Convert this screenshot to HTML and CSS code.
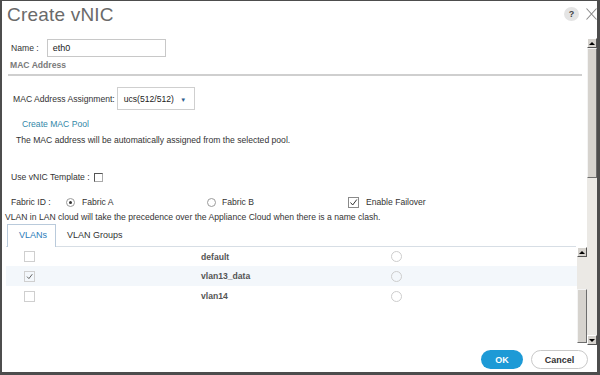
FILE: index.html
```html
<!DOCTYPE html>
<html lang="en">
<head>
    <meta charset="UTF-8">
    <title>Create vNIC</title>
    <link rel="stylesheet" href="styles.css">
</head>
<body>
    <div class="dialog">
        <div class="header">
            <h1 class="title">Create vNIC</h1>
            <span class="help">?</span>
            <svg class="close" width="11" height="12" viewBox="0 0 11 12">
                <path d="M0.5 0.5 L10.5 11.5 M10.5 0.5 L0.5 11.5" stroke="#8a8a8a" stroke-width="1.1" fill="none"/>
            </svg>
        </div>

        <div class="main">
            <div class="content">
                <div class="name-row">
                    <span class="label">Name :</span>
                    <div class="text-input">eth0</div>
                </div>
                <div class="section-title">MAC Address</div>
                <div class="rule"></div>

                <div class="assign-row">
                    <span class="label">MAC Address Assignment:</span>
                    <div class="select">ucs(512/512) <span class="caret">&#9660;</span></div>
                </div>
                <div class="link">Create MAC Pool</div>
                <div class="desc">The MAC address will be automatically assigned from the selected pool.</div>

                <div class="template-row">
                    <span class="label">Use vNIC Template :</span>
                    <span class="box-small"></span>
                </div>

                <div class="fabric-row">
                    <span class="label fabric-label">Fabric ID :</span>
                    <span class="radio checked"></span>
                    <span class="opt-a">Fabric A</span>
                    <span class="radio"></span>
                    <span class="opt-b">Fabric B</span>
                    <span class="checkbox dark">
                        <svg width="9" height="9" viewBox="0 0 9 9"><path d="M1.5 4.5 L3.7 7 L7.8 1.5" stroke="#333" stroke-width="1" fill="none"/></svg>
                    </span>
                    <span class="failover">Enable Failover</span>
                </div>

                <div class="note">VLAN in LAN cloud will take the precedence over the Appliance Cloud when there is a name clash.</div>

                <div class="vlan-panel">
                    <div class="tabs">
                        <div class="tab active">VLANs</div>
                        <div class="tab">VLAN Groups</div>
                    </div>
                    <div class="table-area">
                        <div class="rows">
                            <div class="row">
                                <span class="checkbox"></span>
                                <span class="vlan-name">default</span>
                                <span class="radio light"></span>
                            </div>
                            <div class="row selected">
                                <span class="checkbox">
                                    <svg width="9" height="9" viewBox="0 0 9 9"><path d="M2 4.6 L3.9 6.6 L7.3 2.2" stroke="#555" stroke-width="0.9" fill="none"/></svg>
                                </span>
                                <span class="vlan-name">vlan13_data</span>
                                <span class="radio light"></span>
                            </div>
                            <div class="row">
                                <span class="checkbox"></span>
                                <span class="vlan-name">vlan14</span>
                                <span class="radio light"></span>
                            </div>
                        </div>
                        <div class="scrollbar inner">
                            <div class="arrow up"></div>
                            <div class="track short"></div>
                            <div class="thumb grow"></div>
                        </div>
                    </div>
                </div>
            </div>

            <div class="scrollbar outer">
                <div class="arrow up"></div>
                <div class="thumb tall"></div>
                <div class="track grow"></div>
                <div class="arrow down"></div>
            </div>
        </div>

        <div class="footer">
            <button class="btn btn-ok">OK</button>
            <button class="btn btn-cancel">Cancel</button>
        </div>
    </div>
</body>
</html>
```

FILE: styles.css
```css
body {
    margin: 0;
    font-family: "Liberation Sans", Arial, sans-serif;
    font-size: 8.6px;
    color: #333;
}

.dialog {
    width: 600px;
    height: 375px;
    box-sizing: border-box;
    border: 2px solid #4d4d4d;
    border-top-width: 1px;
    border-right-width: 3px;
    border-bottom-width: 3px;
    background-color: #fff;
    display: flex;
    flex-direction: column;
}

/* header */
.header {
    height: 36px;
    flex-shrink: 0;
    display: flex;
    align-items: flex-start;
    padding-left: 5px;
}

.title {
    flex: 1;
    margin: 3px 0 0 0;
    font-size: 19px;
    font-weight: normal;
    color: #6a6a6a;
    letter-spacing: 0.2px;
}

.help {
    width: 15px;
    height: 14px;
    margin-top: 6px;
    border-radius: 50%;
    background-color: #e4e4e4;
    color: #444;
    font-size: 9px;
    font-weight: bold;
    text-align: center;
    line-height: 14px;
}

.close {
    margin: 7px 0 0 7px;
}

/* main area */
.main {
    height: 308px;
    flex-shrink: 0;
    display: flex;
}

.content {
    flex: 1;
    overflow: hidden;
}

.label {
    white-space: nowrap;
}

.name-row {
    margin-top: 2px;
    height: 18px;
    display: flex;
    align-items: center;
    padding-left: 9px;
}

.text-input {
    margin-left: 8px;
    width: 112px;
    height: 16px;
    border: 1px solid #c8c8c8;
    padding-left: 5px;
    line-height: 16px;
    font-size: 9px;
    color: #222;
}

.section-title {
    margin: 2px 0 0 8px;
    height: 12px;
    line-height: 12px;
    color: #7a7a7a;
    font-weight: bold;
}

.rule {
    margin: 3px 5px 0 6px;
    height: 2px;
    background-color: #cfcfcf;
}

.assign-row {
    margin-top: 11px;
    height: 23px;
    display: flex;
    align-items: center;
    padding-left: 11px;
}

.select {
    margin-left: 2px;
    width: 70px;
    height: 21px;
    border: 1px solid #cfcfcf;
    padding-left: 6px;
    line-height: 22px;
    color: #222;
    white-space: nowrap;
}

.caret {
    margin-left: 4px;
    font-size: 6px;
    color: #2d5d8c;
}

.link {
    margin: 8px 0 0 20px;
    height: 12px;
    line-height: 12px;
    color: #3287a8;
}

.desc {
    margin: 4px 0 0 14px;
    height: 12px;
    line-height: 12px;
}

.template-row {
    margin-top: 25px;
    height: 12px;
    display: flex;
    align-items: center;
    padding-left: 9px;
}

.box-small {
    margin-left: 4px;
    width: 7px;
    height: 7px;
    border: 1px solid #555;
    border-right-color: #aaa;
    border-bottom-color: #aaa;
}

.fabric-row {
    margin-top: 12px;
    height: 14px;
    display: flex;
    align-items: center;
    padding-left: 9px;
}

.fabric-label {
    width: 55px;
}

.radio {
    width: 9px;
    height: 9px;
    border: 1px solid #9a9a9a;
    border-radius: 50%;
    box-sizing: border-box;
    display: flex;
    align-items: center;
    justify-content: center;
}

.radio.checked::after {
    content: "";
    width: 3px;
    height: 3px;
    border-radius: 50%;
    background-color: #333;
}

.radio.light {
    width: 11px;
    height: 11px;
    border-color: #cdcdcd;
}

.opt-a {
    margin-left: 7px;
    width: 125px;
}

.opt-b {
    margin-left: 6px;
    width: 126px;
}

.checkbox {
    width: 11px;
    height: 11px;
    box-sizing: border-box;
    border: 1px solid #cfcfcf;
    display: flex;
    align-items: center;
    justify-content: center;
}

.checkbox.dark {
    border-color: #8a8a8a;
}

.failover {
    margin-left: 7px;
}

.note {
    margin: 3px 0 0 3px;
    height: 10px;
    line-height: 10px;
    white-space: nowrap;
}

/* vlan tabs + table */
.vlan-panel {
    margin: 2px 0 0 4px;
}

.tabs {
    height: 22px;
    display: flex;
    border-bottom: 1px solid #d7dee5;
    margin-right: 11px;
}

.tab {
    padding: 0 11px;
    line-height: 22px;
    font-size: 9px;
    color: #333;
}

.tab.active {
    margin-left: 1px;
    width: 25px;
    border: 1px solid #b9cadb;
    border-bottom: none;
    line-height: 21px;
    color: #2b7bb9;
    margin-bottom: -1px;
    background-color: #fff;
    position: relative;
}

.table-area {
    height: 96px;
    display: flex;
}

.rows {
    flex: 1;
}

.row {
    height: 20px;
    display: flex;
    align-items: center;
    padding-left: 18px;
}

.row:first-child {
    height: 19px;
}

.row.selected {
    background-color: #f3f7fb;
}

.vlan-name {
    margin-left: 166px;
    width: 190px;
    font-weight: bold;
    color: #555;
}

/* classic scrollbars */
.scrollbar {
    width: 10px;
    display: flex;
    flex-direction: column;
    background-color: #ebe9e5;
}

.scrollbar.outer {
    margin-top: 1px;
}

.arrow {
    height: 10px;
    box-sizing: border-box;
    background-color: #d6d3ce;
    border: 1px solid #fff;
    border-right-color: #555;
    border-bottom-color: #555;
    display: flex;
    align-items: center;
    justify-content: center;
}

.arrow.up::after {
    content: "";
    border-left: 3px solid transparent;
    border-right: 3px solid transparent;
    border-bottom: 3px solid #000;
}

.arrow.down::after {
    content: "";
    border-left: 3px solid transparent;
    border-right: 3px solid transparent;
    border-top: 3px solid #000;
}

.thumb {
    box-sizing: border-box;
    background-color: #d6d3ce;
    border: 1px solid #f4f4f4;
    border-right-color: #6d6d6d;
    border-bottom-color: #6d6d6d;
}

.thumb.tall {
    height: 130px;
}

.track.short {
    height: 32px;
}

.grow {
    flex: 1;
}

/* footer */
.footer {
    flex: 1;
    display: flex;
    justify-content: flex-end;
    align-items: flex-start;
    gap: 8px;
    padding: 5px 9px 0 0;
}

.btn {
    height: 19px;
    border-radius: 10px;
    font-family: "Liberation Sans", Arial, sans-serif;
    font-size: 9px;
    font-weight: bold;
    padding: 0;
    cursor: pointer;
}

.btn-ok {
    width: 42px;
    border: none;
    background-color: #1d9ad6;
    color: #fff;
}

.btn-cancel {
    width: 57px;
    border: 1px solid #c9c9c9;
    background-color: #fff;
    color: #333;
}
```
